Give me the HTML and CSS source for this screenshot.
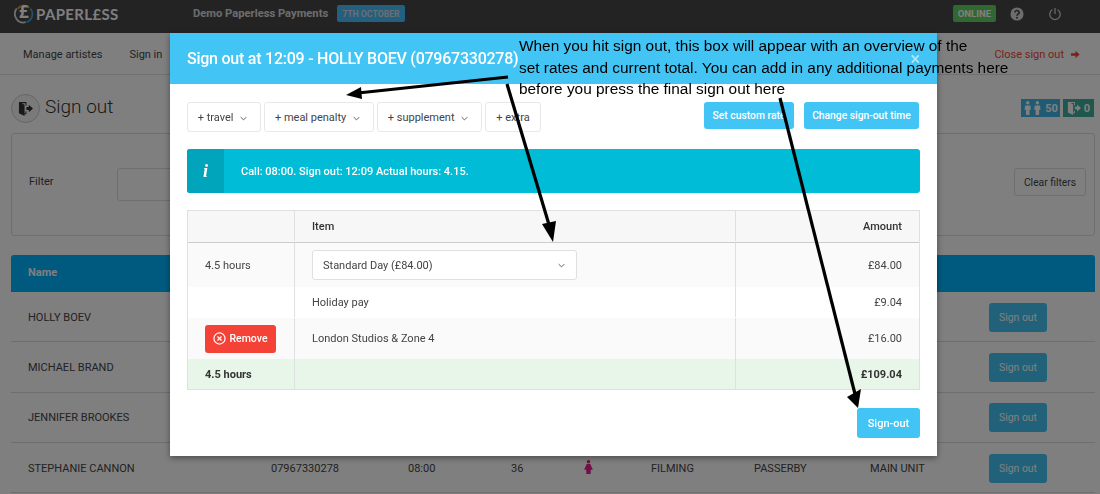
FILE: index.html
```html
<!DOCTYPE html>
<html lang="en">
<head>
<meta charset="utf-8">
<title>Sign out</title>
<link rel="stylesheet" href="styles.css">
</head>
<body>
<header class="topbar">
  <div class="logo">
    <svg class="logo-mark" viewBox="0 0 22 22" width="20" height="20"><path d="M4 5A9.5 9.5 0 0 1 17 4" fill="none" stroke="#e0962c" stroke-width="2"/><path d="M18 5A9.5 9.5 0 0 1 14 20" fill="none" stroke="#38a5d8" stroke-width="2"/><path d="M13 20A9.5 9.5 0 0 1 3 5" fill="none" stroke="#ddd" stroke-width="2"/></svg>
    <span class="logo-pound">£</span>
    <span class="logo-text">PAPERL£SS</span>
  </div>
  <div class="event">Demo Paperless Payments</div>
  <span class="tag tag-date">7TH OCTOBER</span>
  <div class="topbar-right">
    <span class="tag tag-online">ONLINE</span>
    <svg class="top-icon help" viewBox="0 0 16 16" width="14" height="14"><circle cx="8" cy="8" r="7.5" fill="#fff"/><path d="M5.6 6.2a2.4 2.2 0 1 1 3.6 1.9c-.8.5-1.2.9-1.2 1.8" fill="none" stroke="#464646" stroke-width="1.9"/><circle cx="8" cy="12.3" r="1.1" fill="#464646"/></svg>
    <svg class="top-icon power" viewBox="0 0 16 16" width="14" height="14"><path d="M5 3.2a6 6 0 1 0 6 0" fill="none" stroke="#fff" stroke-width="1.4"/><path d="M8 1v7" stroke="#fff" stroke-width="1.4"/></svg>
  </div>
</header>

<nav class="subnav">
  <a class="nav-link">Manage artistes</a>
  <a class="nav-link">Sign in</a>
  <a class="nav-close">Close sign out <svg viewBox="0 0 10 10" width="9" height="9"><path d="M0 3.5h5V.8L9.6 5 5 9.2V6.5H0z" fill="currentColor"/></svg></a>
</nav>

<main class="content">
  <div class="page-head">
    <span class="head-icon"><svg viewBox="0 0 16 16" width="15" height="15"><path d="M1 1h8v4H8V2.300H4l3 1.700v9h1V11h1v3H7v2L1 13z" fill="#333"/><path d="M9 6.500h2.500V4L16 8l-4.500 4V9.500H9z" fill="#333"/></svg></span>
    <h1>Sign out</h1>
    <div class="counts">
      <span class="count count-in"><svg viewBox="0 0 22 16" width="20" height="14"><g fill="#fff"><circle cx="5" cy="2" r="2"/><path d="M2 5h6l.6 5H7v6H3v-6H1.400z"/><circle cx="16" cy="2" r="2"/><path d="M13 5h6l.6 5H18v6h-4v-6h-1.600z"/></g></svg>50</span>
      <span class="count count-out"><svg viewBox="0 0 16 16" width="14" height="14"><path d="M1 1h8v4H8V2.300H4l3 1.700v9h1V11h1v3H7v2L1 13z" fill="#fff"/><path d="M9 6.500h2.500V4L16 8l-4.500 4V9.500H9z" fill="#fff"/></svg>0</span>
    </div>
  </div>

  <section class="filter-card">
    <label class="filter-label">Filter</label>
    <div class="filter-input"></div>
    <button class="btn-clear">Clear filters</button>
  </section>

  <section class="list">
    <div class="list-head">Name</div>
    <div class="list-row"><span class="c-name">HOLLY BOEV</span><span class="c-action"><button class="btn-signout">Sign out</button></span></div>
    <div class="list-row"><span class="c-name">MICHAEL BRAND</span><span class="c-action"><button class="btn-signout">Sign out</button></span></div>
    <div class="list-row"><span class="c-name">JENNIFER BROOKES</span><span class="c-action"><button class="btn-signout">Sign out</button></span></div>
    <div class="list-row">
      <span class="c-name">STEPHANIE CANNON</span>
      <span>07967330278</span>
      <span>08:00</span>
      <span>36</span>
      <span><svg viewBox="0 0 10 16" width="9" height="14"><g fill="#e91e8c"><circle cx="5" cy="2" r="2"/><path d="M3 4.500h4L10 11H7.500v5h-5v-5H0z"/></g></svg></span>
      <span>FILMING</span>
      <span>PASSERBY</span>
      <span>MAIN UNIT</span>
      <span class="c-action"><button class="btn-signout">Sign out</button></span>
    </div>
  </section>
</main>

<div class="overlay"></div>

<div class="modal">
  <div class="modal-head">
    <h2>Sign out at 12:09 - HOLLY BOEV (07967330278)</h2>
    <span class="modal-x">×</span>
  </div>
  <div class="modal-body">
    <div class="actions">
      <button class="btn-add btn-menu">+ travel <svg class="chev" viewBox="0 0 10 6" width="7" height="5"><path d="M1 1l4 4 4-4" fill="none" stroke="#444" stroke-width="1.200"/></svg></button>
      <button class="btn-add btn-menu">+ meal penalty <svg class="chev" viewBox="0 0 10 6" width="7" height="5"><path d="M1 1l4 4 4-4" fill="none" stroke="#444" stroke-width="1.200"/></svg></button>
      <button class="btn-add btn-menu">+ supplement <svg class="chev" viewBox="0 0 10 6" width="7" height="5"><path d="M1 1l4 4 4-4" fill="none" stroke="#444" stroke-width="1.200"/></svg></button>
      <button class="btn-add">+ extra</button>
      <div class="actions-right">
        <button class="btn-primary btn-rate">Set custom rate</button>
        <button class="btn-primary btn-time">Change sign-out time</button>
      </div>
    </div>

    <div class="info">
      <span class="info-icon">i</span>
      <span class="info-text">Call: 08:00. Sign out: 12:09 Actual hours: 4.15.</span>
    </div>

    <div class="pay-table">
      <div class="pay-row pay-head"><div></div><div>Item</div><div class="amount">Amount</div></div>
      <div class="pay-row pay-std">
        <div>4.5 hours</div>
        <div><div class="select">Standard Day (£84.00)<svg class="chev" viewBox="0 0 10 6" width="7" height="5"><path d="M1 1l4 4 4-4" fill="none" stroke="#444" stroke-width="1.200"/></svg></div></div>
        <div class="amount">£84.00</div>
      </div>
      <div class="pay-row pay-plain"><div></div><div>Holiday pay</div><div class="amount">£9.04</div></div>
      <div class="pay-row pay-zone">
        <div><button class="btn-remove"><svg viewBox="0 0 14 14" width="13" height="13"><circle cx="7" cy="7" r="6" fill="none" stroke="#fff" stroke-width="1.300"/><path d="M4.800 4.800l4.400 4.400M9.200 4.800l-4.400 4.400" stroke="#fff" stroke-width="1.300"/></svg>Remove</button></div>
        <div>London Studios &amp; Zone 4</div>
        <div class="amount">£16.00</div>
      </div>
      <div class="pay-row pay-total"><div>4.5 hours</div><div></div><div class="amount">£109.04</div></div>
    </div>

    <div class="modal-foot"><button class="btn-primary btn-final">Sign-out</button></div>
  </div>
</div>

<div class="note">When you hit sign out, this box will appear with an overview of the<br>set rates and current total. You can add in any additional payments here<br>before you press the final sign out here</div>

<svg class="arrows" viewBox="0 0 1100 494" width="1100" height="494">
  <g stroke="#000" stroke-width="3.200" fill="none">
    <path d="M508 77L358 93"/>
    <path d="M507 84L550 228"/>
    <path d="M780 98L855 394"/>
  </g>
  <g fill="#000">
    <path d="M346 95L361 87L362 99z"/>
    <path d="M553 242L542 224L556 221z"/>
    <path d="M858 408L847 397L861 389z"/>
  </g>
</svg>
</body>
</html>
```
FILE: styles.css
```css
* { box-sizing: border-box; }
html, body { margin: 0; height: 494px; overflow: hidden; }
body { background: #fff; font-family: Roboto, "Liberation Sans", sans-serif; font-size: 11px; color: #444; }
button { font-family: inherit; cursor: pointer; }

.topbar { height: 33px; background: #464646; display: flex; align-items: center; padding: 0 38px 6px 14px; color: #fff; }
.logo { position: relative; display: flex; align-items: center; width: 179px; }
.logo-mark { flex: none; }
.logo-pound { position: absolute; left: 5px; top: -4px; font: 700 17px "Open Sans", sans-serif; color: #fff; }
.logo-text { margin-left: 2px; font: 700 15px Lato, sans-serif; letter-spacing: .35px; color: #fff; }
.event { font-weight: 700; font-size: 11.200px; color: #fff; margin-right: 9px; opacity: .8; }
.tag { height: 17px; display: inline-flex; align-items: center; padding: 0 5px; border-radius: 2px; font-size: 9.500px; font-weight: 700; color: #fff; }
.tag-date { background: #46bfff; color: #ddd; font-size: 8.700px; }
.tag-online { background: #60d064; }
.topbar-right { margin-left: auto; display: flex; align-items: center; }
.top-icon { opacity: .8; }
.help { margin-left: 14px; }
.power { margin-left: 24px; }

.subnav { height: 41px; background: #fff; border-bottom: 1px solid #e0e0e0; display: flex; align-items: center; padding: 0 20px 0 23px; margin-top: 1px; }
.nav-link { margin-right: 27px; color: #444; }
.nav-close { margin-left: auto; color: #f44336; display: flex; align-items: center; gap: 7px; }

.content { padding: 0 5px 0 11px; }
.page-head { height: 58px; padding-top: 8px; display: flex; align-items: center; }
.head-icon { width: 29px; height: 29px; border: 1px solid #ccc; border-radius: 50%; display: flex; align-items: center; justify-content: center; background: #f5f5f5; }
.page-head h1 { margin: 0 0 4px 5px; font-size: 19px; font-weight: 300; color: #333; }
.counts { margin-left: auto; display: flex; gap: 3px; margin-right: 1px; }
.count { height: 18px; display: flex; align-items: center; justify-content: center; gap: 2px; color: #fff; font-size: 11px; font-weight: 700; }
.count-in { width: 39px; background: #42b4e6; }
.count-out { width: 31px; background: #3fae9d; gap: 3px; }

.filter-card { height: 103px; background: #fff; border: 1px solid #ddd; border-radius: 3px; display: flex; align-items: flex-start; padding: 34px 8px 0 17px; }
.filter-label { width: 88px; margin-top: 7px; }
.filter-input { width: 300px; height: 33px; border: 1px solid #ddd; border-radius: 3px; }
.btn-clear { margin-left: auto; height: 28px; width: 72px; padding: 0; background: #fff; border: 1px solid #ddd; border-radius: 3px; font-size: 10.300px; color: #444; }

.list { margin-top: 19px; }
.list-head { height: 37px; background: #00b4ff; border-radius: 3px 3px 0 0; color: #fff; font-weight: 700; display: flex; align-items: center; padding-left: 17px; padding-bottom: 2px; }
.list-row { height: 50.300px; background: #fff; border-bottom: 1px solid #ddd; display: grid; grid-template-columns: 243px 137px 103px 73px 67px 103px 116px 119px 123px; align-items: center; padding-top: 1px; }
.list-row > span { padding-left: 17px; }
.c-action { grid-column: 9; }
.btn-signout { width: 58px; height: 29px; padding: 0; background: #42c5f5; border: 0; border-radius: 3px; color: #fff; font-size: 10.400px; }

.overlay { position: fixed; inset: 0; background: rgba(0, 0, 0, .5); }

.modal { position: absolute; left: 170px; top: 33px; width: 767px; height: 423px; background: #fff; box-shadow: 0 2px 6px rgba(0, 0, 0, .4); }
.modal-head { height: 51px; background: #42c5f5; display: flex; align-items: center; padding: 0 17px; color: #fff; }
.modal-head h2 { margin: 0; font-size: 16px; font-weight: 500; letter-spacing: -.24px; white-space: nowrap; }
.modal-x { margin-left: auto; font-size: 18px; opacity: .6; }
.modal-body { padding: 18px 17px 0; }
.actions { display: flex; gap: 3px; height: 30px; }
.btn-add { height: 30px; padding: 0; border: 1px solid #e8e8e8; border-radius: 3px; background: #fff; font-size: 11px; color: #444; }
.btn-menu { padding-right: 3px; }
.btn-add:nth-child(1) { width: 74px; }
.btn-add:nth-child(2) { width: 110px; }
.btn-add:nth-child(3) { width: 105px; }
.btn-add:nth-child(4) { width: 56px; }
.chev { margin-left: 4px; }
.actions-right { margin-left: auto; display: flex; gap: 10px; margin-right: 1px; }
.btn-primary { height: 27px; padding: 0; border: 0; border-radius: 3px; background: #42c5f5; color: #fff; font-size: 10.300px; font-weight: 500; white-space: nowrap; }
.btn-rate { width: 90px; }
.btn-time { width: 115px; }

.info { margin-top: 17px; height: 44px; background: #00bcd6; border-radius: 3px; display: flex; align-items: center; color: #fff; overflow: hidden; }
.info-icon { width: 37px; height: 100%; background: #00a5bb; display: flex; align-items: center; justify-content: center; font: italic 700 18px "Liberation Serif", serif; }
.info-text { margin-left: 17px; font-weight: 500; font-size: 11px; }

.pay-table { margin-top: 17px; border: 1px solid #e0e0e0; color: #444; }
.pay-row { display: grid; grid-template-columns: 106px 441px 1fr; }
.pay-row > div { display: flex; align-items: center; padding: 0 17px; }
.pay-row > div + div { border-left: 1px solid #e0e0e0; }
.pay-row > .amount { justify-content: flex-end; }
.pay-head { height: 32px; background: #f7f7f7; border-bottom: 1px solid #ccc; font-weight: 500; color: #333; padding-bottom: 1px; }
.pay-std { height: 44px; background: #fafafa; }
.pay-plain { height: 31px; background: #fff; padding-bottom: 1px; }
.pay-zone { height: 41px; background: #fafafa; }
.pay-total { height: 30px; background: #e8f5e9; font-weight: 700; color: #333; }
.select { width: 265px; height: 30px; border: 1px solid #e0e0e0; border-radius: 3px; background: #fff; display: flex; align-items: center; justify-content: space-between; padding: 0 11px 0 10px; font-size: 11px; }
.btn-remove { width: 71px; height: 28px; padding: 0; border: 0; border-radius: 3px; background: #f44336; color: #fff; font-size: 10.500px; font-weight: 500; display: flex; align-items: center; justify-content: center; gap: 3px; }

.modal-foot { display: flex; justify-content: flex-end; margin-top: 18px; }
.btn-final { width: 63px; height: 30px; font-size: 11px; }

.note { position: absolute; left: 519px; top: 35px; font: 15.400px/21.500px "Liberation Sans", Arial, sans-serif; color: #000; white-space: nowrap; }
.arrows { position: absolute; left: 0; top: 0; pointer-events: none; }
```
